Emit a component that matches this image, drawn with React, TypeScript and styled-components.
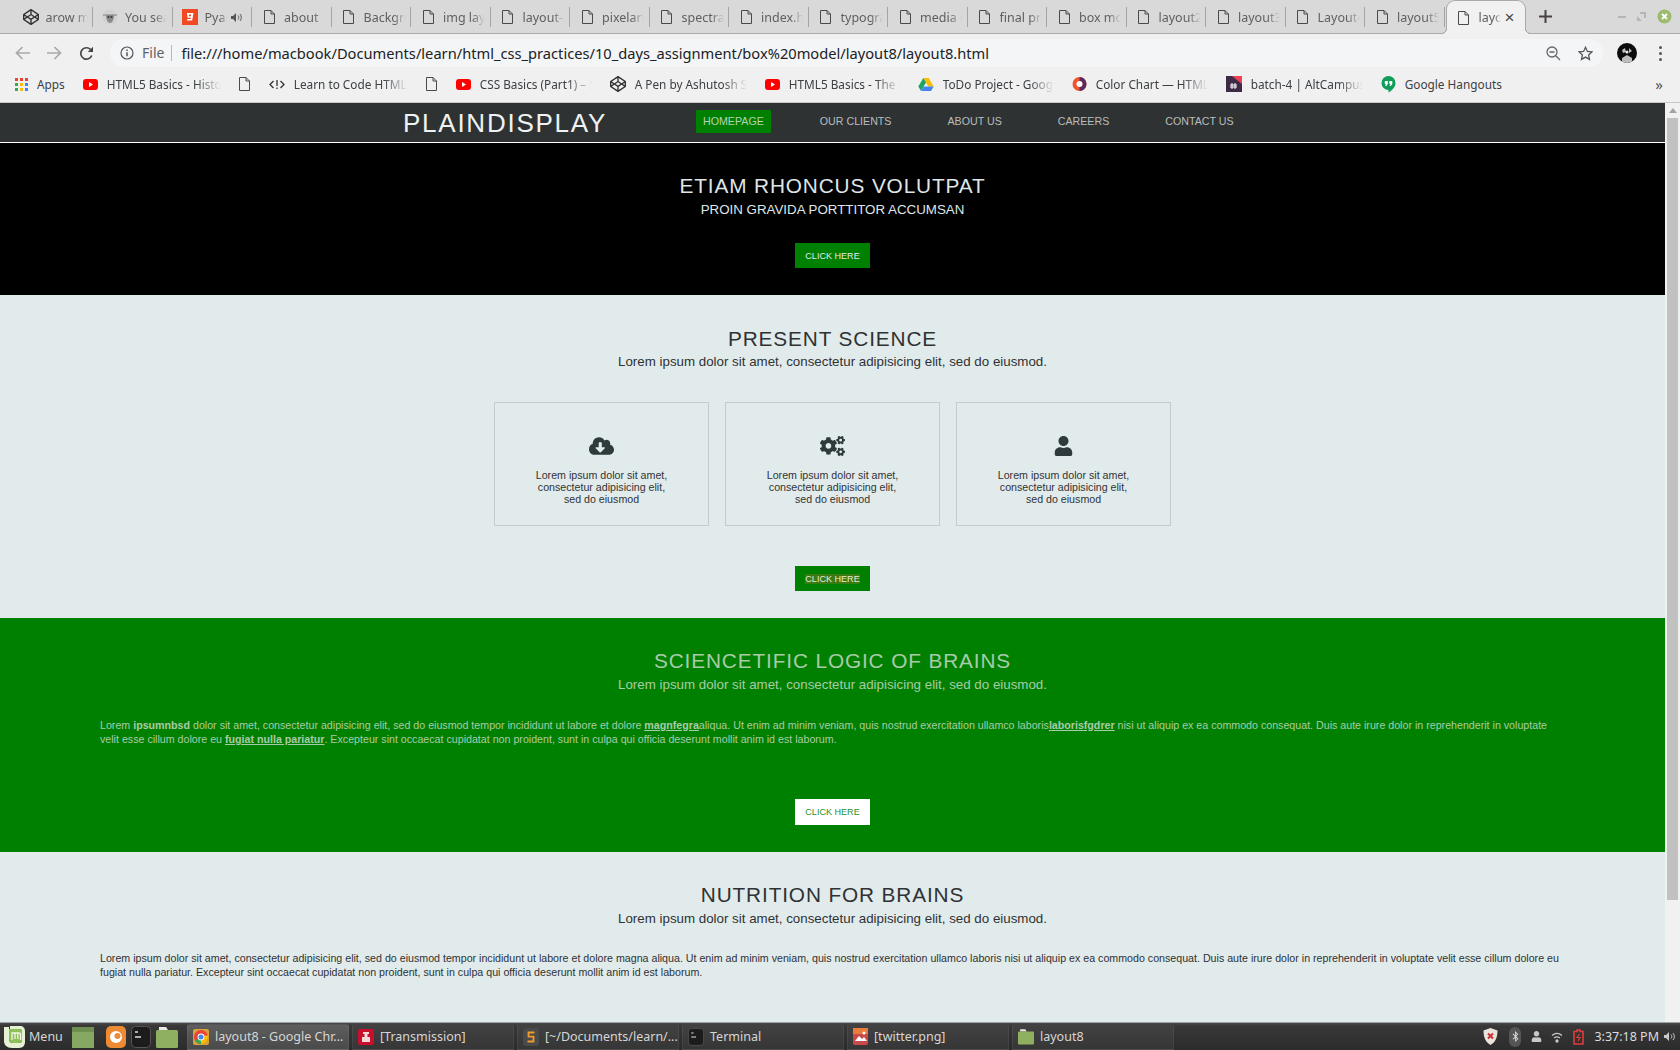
import React from 'react';
import styled, { createGlobalStyle } from 'styled-components';
import { FaCloudDownloadAlt, FaCogs, FaUser, FaCodepen, FaBluetoothB } from 'react-icons/fa';

const Global = createGlobalStyle`
  html, body { margin: 0; padding: 0; height: 100%; overflow: hidden; }
  #root { height: 100%; }
  * { box-sizing: border-box; }
`;

const ui = '"Noto Sans", "Open Sans", sans-serif';
const web = '"Liberation Sans", Arial, sans-serif';

const Desktop = styled.div`
  width: 1680px; height: 1050px; display: grid;
  grid-template-rows: 34px 34px 35px 919px 28px;
  overflow: hidden; font-family: ${ui};
`;

/* ---------- tab strip ---------- */
const TabStrip = styled.div`
  display: flex; align-items: stretch; padding-left: 13.5px;
  background: #d9d9d9; border-bottom: 1px solid #a9a9a9; position: relative;
`;
const Tab = styled.div`
  width: 79.5px; flex: none; display: flex; align-items: center;
  padding-left: 9px; border-right: 1px solid #a4a4a4; height: 20px; margin-top: 7px;
  font-size: 12.5px; color: #5f5f5f;
`;
const TabIconBox = styled.span`
  width: 16px; height: 16px; flex: none; display: flex; align-items: center; justify-content: center;
  color: #3c3c3c;
`;
const TabLabel = styled.span<{ $w?: number }>`
  margin-left: 7px; width: ${p => p.$w ?? 42}px; overflow: hidden; white-space: nowrap;
  -webkit-mask-image: linear-gradient(90deg, #000 70%, transparent 100%);
  mask-image: linear-gradient(90deg, #000 70%, transparent 100%);
`;
const ActiveTab = styled.div`
  width: 80px; height: 34px; flex: none; position: relative; margin-left: 1px; background: #f1f1f2;
  border: 1px solid #a9a9a9; border-bottom: none; border-radius: 9px 9px 0 0; display: flex;
  align-items: center; padding-left: 9px; font-size: 12.5px; color: #5f5f5f; z-index: 1;
  &::before, &::after {
    content: ''; position: absolute; bottom: 0; width: 6px; height: 6px;
  }
  &::before { left: -6px; background: radial-gradient(circle at 0 0, transparent 5px, #a9a9a9 5.2px, #a9a9a9 6px, #f1f1f2 6.2px); }
  &::after { right: -6px; background: radial-gradient(circle at 100% 0, transparent 5px, #a9a9a9 5.2px, #a9a9a9 6px, #f1f1f2 6.2px); }
`;
const TabClose = styled.span`
  margin-left: 4px; font-size: 17px; color: #444; line-height: 1; font-family: ${web};
`;
const NewTab = styled.span`
  margin-left: 11px; align-self: center; width: 18px; height: 18px; display: flex;
  align-items: center; justify-content: center; color: #4a4a4a;
`;
const WindowControls = styled.div`
  margin-left: auto; display: flex; align-items: center; gap: 11px; padding-right: 8px;
`;

/* ---------- toolbar ---------- */
const Toolbar = styled.div`
  background: #f0f0f1; display: flex; align-items: center; padding: 4px 0 0 14px; position: relative;
`;
const NavIcon = styled.span<{ $w?: number; $gap?: number }>`
  width: ${p => p.$w ?? 16}px; height: 16px; display: flex; flex: none; align-items: center; justify-content: center;
  margin-left: ${p => p.$gap ?? 0}px;
`;
const Pill = styled.div`
  margin-left: 16px; width: 1493px; height: 28px; border-radius: 14px; background: #f4f5f6;
  display: flex; align-items: center; padding-left: 10px; flex: none;
`;
const PillFile = styled.span`
  margin-left: 8px; font-size: 14px; color: #5f6368; padding-right: 7px; border-right: 1px solid #b9b9b9; line-height: 16px;
`;
const Url = styled.span`
  margin-left: 9px; font-size: 14.66px; color: #202124; white-space: nowrap;
`;
const PillRight = styled.div`
  margin-left: auto; display: flex; align-items: center; gap: 17px; padding-right: 10px;
`;
const Avatar = styled.span`
  margin-left: 14px; width: 20px; height: 20px; border-radius: 50%; flex: none; overflow: hidden; display: block;
`;
const Dots = styled.span`
  margin-left: 22px; display: flex; flex-direction: column; gap: 3px;
  i { width: 3px; height: 3px; border-radius: 50%; background: #555; display: block; }
`;

/* ---------- bookmarks ---------- */
const Bookmarks = styled.div`
  background: #f0f0f1; border-bottom: 1px solid #c8c8c8; display: flex; align-items: center;
  padding: 0 0 2px 15px; gap: 18px; position: relative; font-size: 11.8px; color: #3c4043;
`;
const Bookmark = styled.div<{ $pad?: number }>`
  display: flex; align-items: center; gap: 9px; flex: none; padding-right: ${p => p.$pad ?? 0}px;
`;
const BookmarkLabel = styled.span<{ $w?: number }>`
  white-space: nowrap; overflow: hidden;
  ${p => p.$w ? `
    width: ${p.$w}px;
    -webkit-mask-image: linear-gradient(90deg, #000 78%, transparent 100%);
    mask-image: linear-gradient(90deg, #000 78%, transparent 100%);
  ` : ''}
`;
const More = styled.span`
  margin-left: auto; padding-right: 17px; font-size: 15px; color: #555; line-height: 1;
`;

/* ---------- web page ---------- */
const Viewport = styled.div`
  display: flex; overflow: hidden; min-height: 0;
`;
const PageArea = styled.div`
  width: 1665px; flex: none; font-family: ${web}; overflow: hidden; background: #e2ebec;
`;
const Scrollbar = styled.div`
  flex: 1; background: #f1f1f1; padding: 5px 2px 0; display: flex; flex-direction: column; align-items: center;
`;
const ScrollArrow = styled.span`
  width: 0; height: 0; border-left: 4px solid transparent; border-right: 4px solid transparent;
  border-bottom: 5px solid #a3a3a3;
`;
const ScrollThumb = styled.span`
  display: block; width: 11px; height: 782px; margin-top: 5px; background: #c1c1c1;
`;
const Nav = styled.header`
  height: 40px; background: #2f3233; border-bottom: 1px solid #fff; display: flex; align-items: center;
  padding-left: 403px;
`;
const Brand = styled.span`
  font-size: 26px; letter-spacing: 1.75px; color: #eef2f3; width: 293px; flex: none; padding-top: 2px;
`;
const NavLink = styled.a<{ $active?: boolean }>`
  height: 23px; display: flex; align-items: center; padding: 0 7px 1px; margin-right: 42px; margin-top: -2px; font-size: 10.67px;
  background: ${p => (p.$active ? '#008000' : 'transparent')};
  color: ${p => (p.$active ? '#b5d4b5' : '#b9bdbe')};
`;
const Section = styled.section<{ $tone: 'dark' | 'light' | 'green'; $top?: number }>`
  display: flex; flex-direction: column; align-items: center; padding: ${p => p.$top ?? 31}px 0 27px;
  background: ${p => (p.$tone === 'dark' ? '#000' : p.$tone === 'green' ? '#008000' : '#e2ebec')};
  color: ${p => (p.$tone === 'dark' ? '#dfe6e8' : p.$tone === 'green' ? '#a9cba9' : '#2f3233')};
`;
const Heading = styled.h2`
  margin: 0; font-size: 20.8px; line-height: 24px; font-weight: 400; letter-spacing: 0.87px; text-transform: uppercase;
`;
const Subheading = styled.p<{ $gap?: number }>`
  margin: ${p => p.$gap ?? 2}px 0 0; font-size: 13.33px; line-height: 18px;
`;
const CardRow = styled.div`
  display: flex; gap: 16px; margin-top: 31px;
`;
const Card = styled.article`
  width: 215px; height: 124px; border: 1px solid #c3ccce; display: flex; flex-direction: column;
  align-items: center; padding-top: 33px; color: #2f3a3c;
`;
const CardIcon = styled.span`
  display: flex; height: 20px; width: 25px; justify-content: center;
  svg { height: 20px; width: 25px; display: block; }
`;
const CardText = styled.p`
  margin: 13px 0 0; font-size: 10.67px; line-height: 12px; text-align: center; color: #333;
`;
const Cta = styled.a<{ $top: number; $invert?: boolean }>`
  width: 75px; height: ${p => (p.$invert ? 26 : 25)}px; margin-top: ${p => p.$top}px; display: flex; align-items: center; justify-content: center;
  font-size: 9.07px; background: ${p => (p.$invert ? '#fff' : '#008000')}; color: ${p => (p.$invert ? '#2b8f2b' : '#e2ebec')};
`;
const Highlight = styled.span`
  background: #3c7a14; color: #e4f0d6;
`;
const Paragraph = styled.p<{ $gap?: number }>`
  align-self: stretch; margin: ${p => p.$gap ?? 24}px 100px 0; font-size: 10.67px; line-height: 14px;
  strong { font-weight: 700; }
  u { font-weight: 700; }
`;

/* ---------- task bar ---------- */
const Taskbar = styled.footer`
  background: linear-gradient(#4a4a4a 0, #383838 10%, #2c2c2c 100%); display: flex; align-items: center;
  padding-left: 4px; color: #d6d6d6; font-size: 12.5px; border-top: 1px solid #9aa3a4;
`;
const MenuButton = styled.div`
  display: flex; align-items: center; gap: 4px; width: 68px; flex: none;
`;
const Launcher = styled.span<{ $gap?: number }>`
  margin-right: ${p => p.$gap ?? 5}px; display: flex; flex: none;
`;
const WinButton = styled.div<{ $active?: boolean }>`
  width: 162px; height: 26px; flex: none; margin-right: 3px; display: flex; align-items: center; gap: 6px;
  padding-left: 5px; border-radius: 3px 3px 0 0; border: 1px solid rgba(255,255,255,0.06); white-space: nowrap;
  background: ${p => p.$active
    ? 'linear-gradient(#5e5e5e, #4a4a4a)'
    : 'linear-gradient(#424242, #363636)'};
`;
const Tray = styled.div`
  margin-left: auto; display: flex; align-items: center; gap: 10px; padding-right: 5px;
  & > :nth-child(1) { margin-right: 1px; }
  & > :nth-child(3) { margin-right: -1px; }
  & > :nth-child(7) { margin-left: -5px; }
`;
const Clock = styled.span`
  font-size: 12.5px; color: #dcdcdc;
`;
const BtBadge = styled.span`
  display: flex; width: 12px; height: 20px; border-radius: 6px; background: #555; align-items: center; justify-content: center;
`;

/* ---------- icons ---------- */
const Doc = ({ c = '#4a4a4a' }: { c?: string }) => (
  <svg width="11" height="14" viewBox="0 0 11 14" fill="none" stroke={c} strokeWidth="1">
    <path d="M.5.5h6.500l3.500 3.500v9.500h-10z" /><path d="M7 .5v3.500h3.500" />
  </svg>
);
const Yt = () => (
  <svg width="15" height="15" viewBox="0 0 15 15">
    <rect y="2" width="15" height="11" rx="3" fill="#f00" /><path d="M6 5l4 2.500-4 2.500z" fill="#fff" />
  </svg>
);
const Pen = ({ s = 16 }: { s?: number }) => <FaCodepen size={s} color="#333" />;
const Code = () => (
  <svg width="16" height="13" viewBox="0 0 16 13" fill="none" stroke="#333" strokeWidth="1.300">
    <path d="M4.500 3L1 6.500 4.500 10M11.500 3L15 6.500 11.500 10" /><path d="M8 2v6M8 9.500v1.500" />
  </svg>
);
const Grid9 = () => (
  <svg width="13" height="13" viewBox="0 0 13 13">
    {[['#ea4335', '#ea4335', '#ea4335'], ['#34a853', '#fbbc05', '#4285f4'], ['#34a853', '#fbbc05', '#4285f4']].map((r, y) =>
      r.map((c, x) => <rect key={`${x}${y}`} x={x * 5} y={y * 5} width="3" height="3" fill={c} />))}
  </svg>
);
const Drive = () => (
  <svg width="16" height="15" viewBox="0 0 16 15">
    <path d="M5.300 1h5.400l5 8.500h-5.400z" fill="#fbbc05" /><path d="M5.300 1L.3 9.500 3 14 8 5.500z" fill="#1fa463" />
    <path d="M3 14h10l2.700-4.500H5.700z" fill="#4285f4" />
  </svg>
);
const ColorChart = () => (
  <svg width="15" height="16" viewBox="0 0 15 16">
    <circle cx="7.500" cy="8" r="7" fill="#f0552d" /><path d="M7.500 1a7 7 0 0 1 0 14z" fill="#5d2a5e" />
    <circle cx="7.500" cy="8" r="3" fill="#fff" />
  </svg>
);
const Batch = () => (
  <svg width="16" height="16" viewBox="0 0 16 16">
    <rect width="16" height="16" fill="#3f2a46" /><path d="M6 0h10v8z" fill="#ef4056" />
    <path d="M6 7v6M9 7v6M4 9h7M4 11h7" stroke="#fff" strokeWidth="1" />
  </svg>
);
const Hangouts = () => (
  <svg width="15" height="17" viewBox="0 0 15 17">
    <path d="M7.500 0a7 7 0 0 1 7 7c0 4-3.500 7.500-7 9.500V14a7 7 0 0 1 0-14z" fill="#0f9d58" />
    <path d="M3.800 5h3v3l-1.500 2H4l1-2H3.800zM8.300 5h3v3l-1.500 2H8.500l1-2H8.300z" fill="#fff" />
  </svg>
);
const Gaana = () => (
  <svg width="16" height="16" viewBox="0 0 16 16">
    <rect width="16" height="16" fill="#f04a24" />
    <path d="M5 4h6.500l-1.300 7.500H5l.3-1.500h3.400l.2-1.300H5.600L5 4.700zM7 5.500l-.2 1.700h2l.3-1.700z" fill="#fff" />
  </svg>
);
const Alien = () => (
  <svg width="16" height="16" viewBox="0 0 16 16">
    <circle cx="8" cy="8" r="7.500" fill="#d2d2d2" /><path d="M1 6h14" stroke="#aaa" strokeWidth="2" />
    <path d="M4 6c0 5 2 8 4 8s4-3 4-8z" fill="#8b8b8b" /><circle cx="6.500" cy="8" r="1" fill="#333" /><circle cx="9.500" cy="8" r="1" fill="#333" />
  </svg>
);
const Speaker = ({ c = '#555' }: { c?: string }) => (
  <svg width="11" height="11" viewBox="0 0 11 11" fill="none">
    <path d="M0 4h2l3-3v9L2 7H0z" fill={c} /><path d="M7 3.500c1 1 1 3 0 4M9 2c1.800 2 1.800 5 0 7" stroke={c} strokeWidth="1" />
  </svg>
);
const Back = ({ flip, c = '#a9a9a9' }: { flip?: boolean; c?: string }) => (
  <svg width="15" height="14" viewBox="0 0 15 14" fill="none" stroke={c} strokeWidth="1.700"
    transform={flip ? 'scale(-1 1)' : undefined}>
    <path d="M15 7H1.500M7.500 1L1.500 7l6 6" />
  </svg>
);
const Reload = () => (
  <svg width="15" height="15" viewBox="0 0 15 15" fill="none" stroke="#444" strokeWidth="1.700">
    <path d="M12.800 9.500A5.700 5.700 0 1 1 11.500 3.400" /><path d="M14 .8v5.200H8.800z" fill="#444" stroke="none" />
  </svg>
);
const Info = () => (
  <svg width="14" height="14" viewBox="0 0 14 14" fill="none" stroke="#555" strokeWidth="1.200">
    <circle cx="7" cy="7" r="6" /><path d="M7 6.200v4M7 3.500v1.500" strokeWidth="1.500" />
  </svg>
);
const Zoom = () => (
  <svg width="15" height="15" viewBox="0 0 15 15" fill="none" stroke="#666" strokeWidth="1.300">
    <circle cx="6" cy="6" r="5" /><path d="M9.700 9.700L14 14M3.500 6h5" />
  </svg>
);
const Star = () => (
  <svg width="15" height="15" viewBox="0 0 15 15" fill="none" stroke="#555" strokeWidth="1.300">
    <path d="M7.500 1.300l1.900 4.100 4.500.5-3.300 3 .9 4.500-4-2.300-4 2.300.9-4.500-3.300-3 4.500-.5z" />
  </svg>
);
const AvatarArt = () => (
  <svg width="20" height="20" viewBox="0 0 20 20">
    <rect width="20" height="20" fill="#0c0c0c" /><path d="M5 7l3-2 1 4-3 1zM12 5l3 3-3 2zM5 15l5-3 5 3v5H5z" fill="#bdbdbd" />
    <circle cx="10" cy="9" r="1.500" fill="#eee" />
  </svg>
);
const Plus = () => (
  <svg width="13" height="13" viewBox="0 0 13 13" stroke="#4a4040" strokeWidth="2"><path d="M6.500 0v13M0 6.500h13" /></svg>
);
const Min = () => <svg width="8" height="8" viewBox="0 0 8 8"><rect y="3" width="8" height="2" fill="#b5b5b5" /></svg>;
const Restore = () => (
  <svg width="9" height="9" viewBox="0 0 9 9"><path d="M3 0h6v6H7V2H3z M0 4l5 5H0z" fill="#b5b5b5" /></svg>
);
const CloseCircle = () => (
  <svg width="15" height="15" viewBox="0 0 15 15">
    <circle cx="7.500" cy="7.500" r="7" fill="#9dbb6e" /><path d="M5 5l5 5M10 5l-5 5" stroke="#fff" strokeWidth="1.800" />
  </svg>
);
const MintLogo = () => (
  <svg width="21" height="22" viewBox="0 0 21 22">
    <path d="M0 1h5v12c0 3 2 4 4 4h6c2 0 3-1 3-3V6c0-2-1-3-3-3H6V0h10c3 0 5 2 5 5v11c0 3-2 6-6 6H8c-5 0-8-3-8-7z" fill="#e6f1d3" />
    <path d="M6 3h9c2 0 3 1 3 3v8c0 2-1 3-3 3H9c-2 0-4-1-4-4V3z" fill="#8fc15a" />
    <path d="M8 14V7h7c1 0 1.500 .5 1.500 1.500V14M11 7.500V13M13.800 7.500V13" fill="none" stroke="#f1f6e6" strokeWidth="1.300" />
  </svg>
);
const FilesGreen = () => <svg width="22" height="22" viewBox="0 0 22 22"><rect y="1" width="22" height="21" fill="#87a862" /><rect y="1" width="22" height="5" fill="#6f8f50" /></svg>;
const Firefox = () => (
  <svg width="20" height="22" viewBox="0 0 20 22">
    <rect width="20" height="22" rx="5" fill="#ef8a34" /><circle cx="10" cy="11" r="6" fill="#fff" /><circle cx="11.500" cy="10" r="3" fill="#ef8a34" />
  </svg>
);
const TermIcon = ({ w = 20, h = 22 }: { w?: number; h?: number }) => (
  <svg width={w} height={h} viewBox="0 0 20 22">
    <rect x=".5" y=".5" width="19" height="21" rx="4" fill="#1c1c1c" stroke="#555" /><path d="M4 6h3M4 11h6" stroke="#ddd" strokeWidth="1.500" />
  </svg>
);
const Folder = ({ w = 22, h = 22 }: { w?: number; h?: number }) => (
  <svg width={w} height={h} viewBox="0 0 22 22">
    <path d="M3 1h7l2 3H3z" fill="#e9e9e9" /><rect y="4" width="22" height="18" rx="1.500" fill="#8fb060" />
  </svg>
);
const Chrome = () => (
  <svg width="16" height="16" viewBox="0 0 16 16">
    <rect width="16" height="16" rx="2" fill="#d8a13a" />
    <circle cx="8" cy="8" r="7" fill="#ea4335" /><path d="M8 8L1.900 11.500A7 7 0 0 0 8 15z" fill="#34a853" />
    <path d="M8 8v7a7 7 0 0 0 6.900-8.500H8z" fill="#fbbc05" /><circle cx="8" cy="8" r="3.400" fill="#fff" /><circle cx="8" cy="8" r="2.500" fill="#4285f4" />
  </svg>
);
const Transmission = () => (
  <svg width="16" height="16" viewBox="0 0 16 16">
    <rect width="16" height="16" rx="2" fill="#c8102e" /><path d="M5 3h6v2H9.500v3H12v5H4V8h2.500V5H5z" fill="#f4d9d9" />
  </svg>
);
const Sublime = () => (
  <svg width="16" height="18" viewBox="0 0 16 18">
    <rect width="16" height="18" rx="3" fill="#4a4a4a" /><path d="M11.500 4.500h-6v4.200h5v4.800h-6" fill="none" stroke="#f29a2e" strokeWidth="1.800" />
  </svg>
);
const Picture = () => (
  <svg width="15" height="17" viewBox="0 0 15 17">
    <rect width="15" height="17" rx="2" fill="#c94a4a" /><rect width="15" height="6" fill="#ea7c3b" /><path d="M2 13l4-5 3 3 2-2 3 4z" fill="#fff" /><circle cx="11" cy="5" r="1.500" fill="#fff" />
  </svg>
);
const Shield = () => (
  <svg width="15" height="17" viewBox="0 0 15 17">
    <path d="M7.500 0l7 2.500c0 7-2 11.500-7 14.500-5-3-7-7.500-7-14.500z" fill="#e9e4da" /><path d="M5 5.500l5 5M10 5.500l-5 5" stroke="#c8303a" strokeWidth="2" />
  </svg>
);
const Wifi = () => (
  <svg width="12" height="12" viewBox="0 0 12 12" fill="none" stroke="#c9c9c9" strokeWidth="1.300">
    <path d="M1 4.500c3-2.500 7-2.500 10 0M3 7c2-1.500 4-1.500 6 0" /><circle cx="6" cy="10" r="1" fill="#c9c9c9" />
  </svg>
);
const Battery = () => (
  <svg width="11" height="16" viewBox="0 0 11 16" fill="none" stroke="#e23b3b" strokeWidth="1.600">
    <path d="M4 1h3v1.500h3V15H1V2.500h3z" /><path d="M6.500 5L4 8.500h3L5 12" strokeWidth="1.200" />
  </svg>
);

const tabs: { label: string; icon?: React.ReactNode; w?: number; extra?: React.ReactNode }[] = [
  { label: 'arow marker', icon: <Pen /> },
  { label: 'You searched', icon: <Alien /> },
  { label: 'Pyar', icon: <Gaana />, w: 22, extra: <NavIcon $w={20}><Speaker /></NavIcon> },
  { label: 'about' }, { label: 'Background' }, { label: 'img layout' }, { label: 'layout-2' },
  { label: 'pixelart' }, { label: 'spectra' }, { label: 'index.html' }, { label: 'typography' },
  { label: 'media query' }, { label: 'final project' }, { label: 'box model' }, { label: 'layout2' },
  { label: 'layout3' }, { label: 'Layout4' }, { label: 'layout5' },
];

const bookmarks: { icon: React.ReactNode; label?: string; w?: number; pad?: number }[] = [
  { icon: <Grid9 />, label: 'Apps' },
  { icon: <Yt />, label: 'HTML5 Basics - History', w: 114 },
  { icon: <Doc />, pad: 1 },
  { icon: <Code />, label: 'Learn to Code HTML & CSS', w: 114 },
  { icon: <Doc />, pad: 1 },
  { icon: <Yt />, label: 'CSS Basics (Part1) – Selectors', w: 112 },
  { icon: <Pen />, label: 'A Pen by Ashutosh Sharma', w: 112 },
  { icon: <Yt />, label: 'HTML5 Basics - The Doctype', w: 111 },
  { icon: <Drive />, label: 'ToDo Project - Google Sheets', w: 111 },
  { icon: <ColorChart />, label: 'Color Chart — HTML Colors', w: 112 },
  { icon: <Batch />, label: 'batch-4 | AltCampus School', w: 112 },
  { icon: <Hangouts />, label: 'Google Hangouts' },
];

const cards = [<FaCloudDownloadAlt key="a" />, <FaCogs key="b" />, <FaUser key="c" />];

const windows: { icon: React.ReactNode; label: string; active?: boolean }[] = [
  { icon: <Chrome />, label: 'layout8 - Google Chr...', active: true },
  { icon: <Transmission />, label: '[Transmission]' },
  { icon: <Sublime />, label: '[~/Documents/learn/...' },
  { icon: <TermIcon w={16} h={18} />, label: 'Terminal' },
  { icon: <Picture />, label: '[twitter.png]' },
  { icon: <Folder w={16} h={17} />, label: 'layout8' },
];

export default function App() {
  return (
    <Desktop>
      <Global />
      <TabStrip>
        {tabs.map(t => (
          <Tab key={t.label}>
            <TabIconBox>{t.icon ?? <Doc />}</TabIconBox>
            <TabLabel $w={t.w}>{t.label}</TabLabel>
            {t.extra}
          </Tab>
        ))}
        <ActiveTab>
          <TabIconBox><Doc /></TabIconBox>
          <TabLabel $w={22}>layout8</TabLabel>
          <TabClose>×</TabClose>
        </ActiveTab>
        <NewTab><Plus /></NewTab>
        <WindowControls><Min /><Restore /><CloseCircle /></WindowControls>
      </TabStrip>

      <Toolbar>
        <NavIcon><Back /></NavIcon>
        <NavIcon $gap={16}><Back flip /></NavIcon>
        <NavIcon $gap={16}><Reload /></NavIcon>
        <Pill>
          <Info />
          <PillFile>File</PillFile>
          <Url>file:///home/macbook/Documents/learn/html_css_practices/10_days_assignment/box%20model/layout8/layout8.html</Url>
          <PillRight><Zoom /><Star /></PillRight>
        </Pill>
        <Avatar><AvatarArt /></Avatar>
        <Dots><i /><i /><i /></Dots>
      </Toolbar>

      <Bookmarks>
        {bookmarks.map((b, i) => (
          <Bookmark key={i} $pad={b.pad}>
            {b.icon}
            {b.label && <BookmarkLabel $w={b.w}>{b.label}</BookmarkLabel>}
          </Bookmark>
        ))}
        <More>»</More>
      </Bookmarks>

      <Viewport>
        <PageArea>
          <Nav>
            <Brand>PLAINDISPLAY</Brand>
            <NavLink $active>HOMEPAGE</NavLink>
            <NavLink>OUR CLIENTS</NavLink>
            <NavLink>ABOUT US</NavLink>
            <NavLink>CAREERS</NavLink>
            <NavLink>CONTACT US</NavLink>
          </Nav>
          <Section $tone="dark" $top={31}>
            <Heading>Etiam rhoncus volutpat</Heading>
            <Subheading $gap={3}>PROIN GRAVIDA PORTTITOR ACCUMSAN</Subheading>
            <Cta $top={24}>CLICK HERE</Cta>
          </Section>
          <Section $tone="light" $top={32}>
            <Heading>Present science</Heading>
            <Subheading>Lorem ipsum dolor sit amet, consectetur adipisicing elit, sed do eiusmod.</Subheading>
            <CardRow>
              {cards.map((icon, i) => (
                <Card key={i}>
                  <CardIcon>{icon}</CardIcon>
                  <CardText>Lorem ipsum dolor sit amet,<br />consectetur adipisicing elit,<br />sed do eiusmod</CardText>
                </Card>
              ))}
            </CardRow>
            <Cta $top={40}><Highlight>CLICK HERE</Highlight></Cta>
          </Section>
          <Section $tone="green">
            <Heading>Sciencetific logic of brains</Heading>
            <Subheading $gap={3}>Lorem ipsum dolor sit amet, consectetur adipisicing elit, sed do eiusmod.</Subheading>
            <Paragraph>
              Lorem <strong>ipsumnbsd</strong> dolor sit amet, consectetur adipisicing elit, sed do eiusmod tempor incididunt ut labore et dolore <u>magnfegra</u>aliqua. Ut enim ad minim veniam, quis nostrud exercitation ullamco laboris<u>laborisfgdrer</u> nisi ut aliquip ex ea commodo consequat. Duis aute irure dolor in reprehenderit in voluptate velit esse cillum dolore eu <u>fugiat nulla pariatur</u>. Excepteur sint occaecat cupidatat non proident, sunt in culpa qui officia deserunt mollit anim id est laborum.
            </Paragraph>
            <Cta $top={53} $invert>CLICK HERE</Cta>
          </Section>
          <Section $tone="light">
            <Heading>Nutrition for brains</Heading>
            <Subheading $gap={3}>Lorem ipsum dolor sit amet, consectetur adipisicing elit, sed do eiusmod.</Subheading>
            <Paragraph $gap={23}>
              Lorem ipsum dolor sit amet, consectetur adipisicing elit, sed do eiusmod tempor incididunt ut labore et dolore magna aliqua. Ut enim ad minim veniam, quis nostrud exercitation ullamco laboris nisi ut aliquip ex ea commodo consequat. Duis aute irure dolor in reprehenderit in voluptate velit esse cillum dolore eu fugiat nulla pariatur. Excepteur sint occaecat cupidatat non proident, sunt in culpa qui officia deserunt mollit anim id est laborum.
            </Paragraph>
          </Section>
        </PageArea>
        <Scrollbar><ScrollArrow /><ScrollThumb /></Scrollbar>
      </Viewport>

      <Taskbar>
        <MenuButton><MintLogo />Menu</MenuButton>
        <Launcher $gap={12}><FilesGreen /></Launcher>
        <Launcher><Firefox /></Launcher>
        <Launcher><TermIcon /></Launcher>
        <Launcher $gap={9}><Folder /></Launcher>
        {windows.map(w => (
          <WinButton key={w.label} $active={w.active}>{w.icon}{w.label}</WinButton>
        ))}
        <Tray>
          <Shield />
          <BtBadge><FaBluetoothB size={11} color="#ddd" /></BtBadge>
          <FaUser size={11} color="#c9c9c9" />
          <Wifi />
          <Battery />
          <Clock>3:37:18 PM</Clock>
          <Speaker c="#c9c9c9" />
        </Tray>
      </Taskbar>
    </Desktop>
  );
}
